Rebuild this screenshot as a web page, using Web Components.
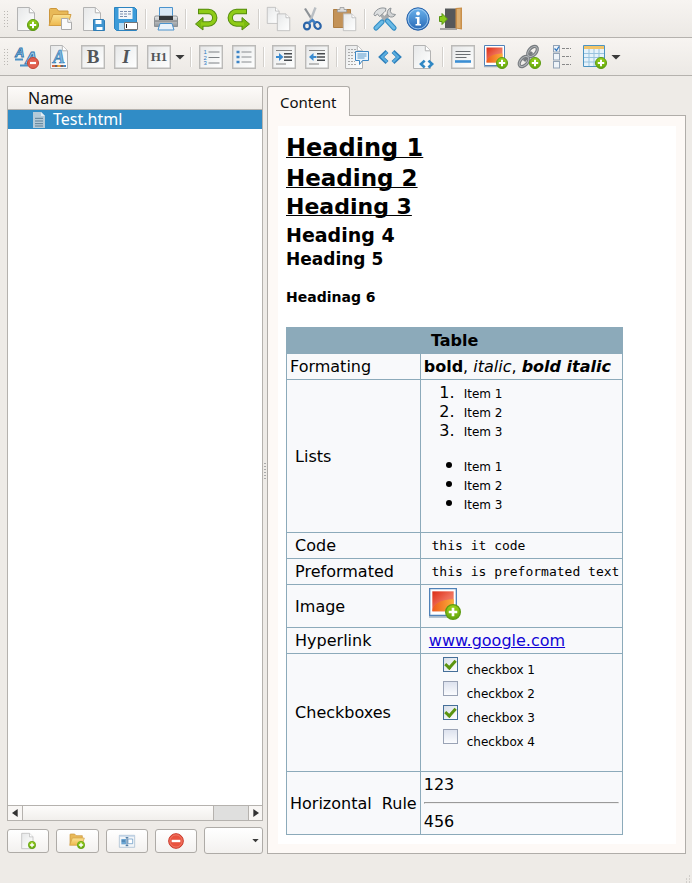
<!DOCTYPE html>
<html lang="en">
<head>
<meta charset="utf-8">
<title>Test.html</title>
<style>
html,body{margin:0;height:100%}
body{background:#eeebe7;color:#111;font:16px/19px "Noto Sans",sans-serif}
</style>
</head>
<body>
<notes-app></notes-app>
<script>
const DEFS = `<defs>
<linearGradient id="pg" x1="0" y1="0" x2="1" y2="1"><stop offset="0" stop-color="#e6e7e8"/><stop offset=".5" stop-color="#f3f4f4"/><stop offset="1" stop-color="#fff"/></linearGradient>
<linearGradient id="gr" x1="0" y1="0" x2="0" y2="1"><stop offset="0" stop-color="#9ad21a"/><stop offset="1" stop-color="#62a60b"/></linearGradient>
<linearGradient id="bl" x1="0" y1="0" x2="0" y2="1"><stop offset="0" stop-color="#6cb4ee"/><stop offset="1" stop-color="#2767b4"/></linearGradient>
<linearGradient id="fo" x1="0" y1="0" x2="0" y2="1"><stop offset="0" stop-color="#fbe393"/><stop offset="1" stop-color="#edb74c"/></linearGradient>
<linearGradient id="rd" x1="0" y1="0" x2="1" y2="1"><stop offset="0" stop-color="#dc2d16"/><stop offset=".5" stop-color="#ee6c56"/><stop offset="1" stop-color="#f59a80"/></linearGradient>
<linearGradient id="or" x1="0" y1="0" x2="1" y2="0"><stop offset="0" stop-color="#ee5a1c"/><stop offset="1" stop-color="#fbb03a"/></linearGradient>
<linearGradient id="me" x1="0" y1="0" x2="0" y2="1"><stop offset="0" stop-color="#e8e9ea"/><stop offset="1" stop-color="#8f9498"/></linearGradient>
</defs>`;
const page = `<path d="M2.5.5h11.8l5.2 5.2v17.8h-17z" fill="url(#pg)" stroke="#b3b3b3"/><path d="M14.3.8v5h5" fill="#fff" stroke="#b3b3b3"/>`;
const smallPage = (x, y) => `<g transform="translate(${x} ${y})"><path d="M.5.5h6.3l3.7 3.7v7.3H.5z" fill="#fafafa" stroke="#aaa"/><path d="M6.8.6v3.7h3.6" fill="#fff" stroke="#aaa"/></g>`;
const plus = `<circle cx="18" cy="18" r="5.5" fill="url(#gr)" stroke="#5c9b12"/><path d="M18 14.8v6.4M14.8 18h6.4" stroke="#fff" stroke-width="2"/>`;
const frame = `<path d="M.7.7h22.600v22.600H.7z" fill="url(#pg)" stroke="#bbbab8" stroke-width="1.400"/>`;
const glyph = (t, s, st, y) => `<text x="12" y="${y}" text-anchor="middle" font-family="Liberation Serif" font-weight="bold" font-size="${s}" ${st} fill="#515559">${t}</text>`;
const angles = (c) => `<path d="M9 6.5L3.2 12 9 17.5M15 6.5l5.8 5.5L15 17.5" fill="none" stroke="${c}" stroke-width="4.2"/>`;
const picture = `<path d="M.5.5h20v20H.5z" fill="#fff" stroke="#5082b8"/><path d="M2.5 2.5h16v15h-16z" fill="url(#rd)"/><path d="M2.5 17.5c0-5 6-9 16-9v9z" fill="url(#or)"/><path d="M0 21.7h21" stroke="#8aa0b5"/>`;
const undo = `<path d="M4 4.500h10.500a5.800 5.800 0 0 1 0 12.500H8" fill="none" stroke="#558c0e" stroke-width="5.400"/><path d="M9 10.500v12.500l-7.500-6z" fill="#7cba12" stroke="#558c0e"/><path d="M5 4.500h9.500a5.800 5.800 0 0 1 0 12.500H7" fill="none" stroke="#8fcb17" stroke-width="3.400"/>`;
const wideFolder = `<path d="M1.5 17.5V2.5q0-1 1-1h6l2 2.5h9.5v5" fill="#e8b958" stroke="#cc963b"/><path d="M1 18.5l4-11h18l-3.5 11z" fill="url(#fo)" stroke="#d29e43"/>`;

const ICONS = {
  'new': page + plus,
  open: wideFolder + smallPage(13, 11),
  'save-page': page + `<path d="M12.5 12.5h10l1 1v10h-11z" fill="#4095d0" stroke="#2f7cb4"/><path d="M14.5 13h6v4h-6zM15.5 20h6v3h-6z" fill="#fff"/>`,
  save: `<path d="M.5.5h20l2 2v21H2.5l-2-2z" fill="#3b9bd9" stroke="#2c83bf"/><path d="M4.5 1h14v11h-14z" fill="#f4f7fa"/><path d="M6 4.500h11M6 7h11M6 9.500h8" stroke="#7d8fb0" stroke-dasharray="3 1"/><path d="M5 16h12v7H5z" fill="#bcdff4"/><path d="M10.5 15.5h13v7h-13z" fill="#fff" stroke="#777"/><path d="M12.5 17v4" stroke="#111"/>`,
  print: `<path d="M5.500.5h13v10h-13z" fill="#d8e8f6" stroke="#4b93cd"/><path d="M.5 10.500q0-1.500 1.500-1.500h20q1.500 0 1.500 1.500v9H.5z" fill="url(#me)" stroke="#8c9195"/><path d="M5 9h14v4H5z" fill="#32363a"/><path d="M1 14h22" stroke="#777"/><path d="M6 16.500h12l2 6.500H4z" fill="#e9f2fb" stroke="#4b93cd"/>`,
  undo,
  redo: `<g transform="translate(24 0) scale(-1 1)">${undo}</g>`,
  copy: `<g transform="translate(-1.500 0) scale(.7)">${page}</g><g transform="translate(8.500 6.500) scale(.73)">${page}</g>`,
  cut: `<path d="M5 1.500l9.500 15" stroke="#8c9196" stroke-width="2.200"/><path d="M15.500.5L9.500 16" stroke="#b9bec3" stroke-width="2.400"/><ellipse cx="7" cy="19" rx="3" ry="3.400" fill="none" stroke="#2b64a8" stroke-width="2.200"/><ellipse cx="17.500" cy="18.500" rx="3" ry="3.600" transform="rotate(-35 17.500 18.500)" fill="none" stroke="#2b64a8" stroke-width="2.200"/><path d="M8.500 16l4-3 3 3" fill="none" stroke="#3f7fc4" stroke-width="2.200"/>`,
  paste: `<path d="M.5 2.500h17v18H.5z" fill="#c39257" stroke="#ad7d42"/><path d="M4.500 2.500h2.500V.5h4v2h2.500v2.500h-9z" fill="#dcdcdc" stroke="#9a9d9f" stroke-width=".8"/><g transform="translate(8.500 6.500) scale(.73)">${page}</g>`,
  tools: `<path d="M10 13L18 5.500" stroke="#a4a8ab" stroke-width="4"/><path d="M22.500 7.500a4.500 4.500 0 0 1-7 1.500 4.800 4.800 0 0 1 2.500-8l-.8 3.800 2.300 2.200z" fill="#d2d4d5" stroke="#8e9397"/><path d="M7.500 7l6 7" stroke="#a8acaf" stroke-width="3.400"/><path d="M1 7.500C2 3 7.500-.5 13 1.500L12.500 4 11 5.500 6.500 9.500l-2-2.500L2 9z" fill="#dddfe0" stroke="#8e9397"/><path d="M14.500 14l6.500 7M9 15l-6 6" stroke="#338cc2" stroke-width="5.200" stroke-linecap="round"/><path d="M14.500 14l6.500 7M9 15l-6 6" stroke="#6abae6" stroke-width="3" stroke-linecap="round"/>`,
  info: `<circle cx="12" cy="12" r="11.200" fill="url(#bl)" stroke="#2a62a8"/><circle cx="12" cy="12" r="9.900" fill="none" stroke="#a3ccf0" stroke-width=".9"/><circle cx="12" cy="6.500" r="1.900" fill="#fff"/><path d="M9.500 10h4v7h1.500v1.500H9.500V17H11v-5.500H9.500z" fill="#fff"/>`,
  exit: `<path d="M6 1.500h12V21H6z" fill="#56585a"/><path d="M1 22h17" stroke="#777" stroke-width="1.200"/><path d="M16.500 1l6.500-.5v22l-6.500-1z" fill="#c98f4a"/><path d="M18 2l3.500-.3v19.500l-3.500-.5z" fill="#deb071"/><path d="M.5 9.500H3V6.500l5.500 5.500L3 17.500v-3H.5z" fill="#8bcc1c" stroke="#569412"/>`,
  clear: `<g font-family="Liberation Sans" font-weight="bold" font-style="italic" fill="#a5d0ee" stroke="#2f75ad" stroke-width=".9"><text x="0" y="12" font-size="13">A</text><text x="10" y="19" font-size="17">A</text></g><path d="M0 14.500h8M5 20.500h8" stroke="#4b92c8" stroke-width="2"/><circle cx="18" cy="18" r="5.500" fill="#e2604f" stroke="#c24535"/><path d="M15 18h6" stroke="#fff" stroke-width="2.200"/>`,
  color: page + `<text x="11" y="17.500" text-anchor="middle" font-family="Liberation Serif" font-style="italic" font-weight="bold" font-size="18" fill="#78b5e0" stroke="#2f75ad" stroke-width=".6">A</text><path d="M4 21h14" stroke="#d9683f" stroke-width="2"/><path d="M7 21h2.500M13 21h2" stroke="#666" stroke-width="2"/><path d="M9.500 21h2.500" stroke="#eba93b" stroke-width="2"/><path d="M15.500 21h2.500" stroke="#3f86c8" stroke-width="2"/>`,
  bold: frame + glyph('B', 19, '', 18),
  italic: frame + glyph('I', 19, 'font-style="italic"', 18),
  heading: frame + glyph('H1', 13, '', 16),
  numbered: frame + `<g font-family="Liberation Sans" font-size="6" fill="#2d78c0"><text x="4.500" y="9">1</text><text x="4.500" y="14.500">2</text><text x="4.500" y="20">3</text></g><path d="M9.500 7h11M9.500 12.500h11M9.500 18h11" stroke="#7c8084"/>`,
  bullets: frame + `<path d="M4.500 7h3M4.500 12h3M4.500 17h3" stroke="#3c84c6" stroke-width="2.600"/><path d="M9.500 7h10M9.500 12h10M9.500 17h10" stroke="#888c90"/>`,
  indent: frame + `<path d="M4 5.500h16M4 19h10" stroke="#777" stroke-width=".9"/><path d="M12 8.700h8M12 12h8M12 15.300h8" stroke="#45494d" stroke-width="1.500"/><path d="M4 11h3V8l4.500 4L7 16v-3H4z" fill="#3b8bd0"/>`,
  outdent: frame + `<path d="M4 5.500h16M4 19h10" stroke="#777" stroke-width=".9"/><path d="M12 8.700h8M12 12h8M12 15.300h8" stroke="#45494d" stroke-width="1.500"/><path d="M11.500 11h-3V8L4 12l4.500 4v-3h3z" fill="#3b8bd0"/>`,
  comment: `<g transform="translate(-2 0)">${page}</g><path d="M3 4.500h9M3 7.500h7M3 10.500h6M3 13.500h6M3 16.500h7M3 19.500h9" stroke="#aaa" stroke-dasharray="2 1"/><path d="M10.500 6.500h13v9h-6l-3 4v-4h-4z" fill="#eaf4fc" stroke="#3e87c3"/><path d="M12.500 9h9M12.500 11h9M12.500 13h7" stroke="#5b9acb"/>`,
  code: angles('#2f7fba') + `<path d="M9 7L3.800 12 9 17M15 7l5.200 5-5.200 5" fill="none" stroke="#59aee0" stroke-width="2"/>`,
  'code-page': page + `<g transform="translate(8 11.500) scale(.63)">${angles('#2f87c4')}</g>`,
  rule: frame + `<path d="M4.500 6.500h15M4.500 9.500h15M4.500 12.500h11" stroke="#6a6e72" stroke-width="1.200"/><path d="M4 16.500h16" stroke="#3b8ed4" stroke-width="2.600"/>`,
  image: picture + plus,
  link: `<g fill="none"><g stroke="#777b7f" stroke-width="3.200"><ellipse cx="15.500" cy="6.500" rx="6" ry="3.600" transform="rotate(-48 15.500 6.500)"/><ellipse cx="7" cy="16.500" rx="6" ry="3.600" transform="rotate(-48 7 16.500)"/><path d="M7 16l8-9"/></g><g stroke="#b4b8bb"><ellipse cx="15.500" cy="6.500" rx="6" ry="3.600" transform="rotate(-48 15.500 6.500)"/><ellipse cx="7" cy="16.500" rx="6" ry="3.600" transform="rotate(-48 7 16.500)"/></g></g>` + plus,
  checks: [.5, 8.5, 16.5].map(y => `<rect x="3.500" y="${y}" width="6" height="6.500" fill="#eef3f8" stroke="#93a3b6"/><path d="M12 ${y + 3}h9" stroke="#888" stroke-dasharray="3 1"/>`).join('') + `<path d="M4.500 3.500l2 2 2.500-4" stroke="#2f75bd" fill="none" stroke-width="1.300"/>`,
  table: `<path d="M.5.5h21v21H.5z" fill="#e5f2fb" stroke="#4c93c1"/><path d="M1 1h20v3H1z" fill="#f2c56a"/><path d="M1 8.500h20M1 12.500h20M1 17h20M6 4v17M11 4v17M16 4v17" stroke="#98c3df"/>` + plus,
  folder: wideFolder + plus,
  rename: `<path d="M.5 3.500h23v18H.5z" fill="#f2f5f8" stroke="#9bb3cc"/><path d="M1 4.500h22" stroke="#bdd0e4" stroke-width="2"/><path d="M3.500 9h7v8h-7z" fill="#6ba5d3"/><path d="M13.500 9h7v7h-7z" fill="#fff" stroke="#5a8fc0"/><path d="M12 7v12M10 7h4M10 19h4M4 12h5" stroke="#41709c" stroke-width="1.500"/>`,
  remove: `<circle cx="12" cy="12" r="11" fill="#e9533f" stroke="#c9392a" stroke-width="1.500"/><circle cx="12" cy="12" r="9.200" fill="none" stroke="#f38c7b"/><path d="M5.500 12h13" stroke="#fff" stroke-width="3.600"/>`,
  down: `<path d="M1 7h22L12 18z" fill="#3a3a3a"/>`,
  left: `<path d="M20 0v24L3 12z" fill="#333"/>`,
  right: `<path d="M4 0v24l17-12z" fill="#333"/>`,
  doc: `<path d="M3 0h12l6 6v18H3z" fill="#b4cad8"/><path d="M15 0v6h6z" fill="#e2edf4"/><path d="M6 9.500h12M6 13.500h12M6 17.500h12M6 21h12" stroke="#5d7f96" stroke-width="1.500"/>`
};

function define(name, html, setup) {
  const t = document.createElement('template');
  t.innerHTML = html;
  customElements.define(name, class extends HTMLElement {
    constructor() {
      super();
      this.attachShadow({ mode: 'open' }).append(t.content.cloneNode(true));
    }
    connectedCallback() { if (setup) setup(this, this.shadowRoot); }
  });
}

define('ui-icon', `<style>:host{display:block;width:24px;height:24px;flex:none}svg{display:block;width:100%;height:100%;overflow:visible}</style><svg viewBox="0 0 24 24" aria-hidden="true"></svg>`,
  (el, root) => { root.querySelector('svg').innerHTML = DEFS + (ICONS[el.getAttribute('name')] || ''); });

define('tool-button', `<style>
:host{display:block;flex:none}
button{display:flex;align-items:center;justify-content:center;width:33px;height:32px;padding:0;border:0;background:none}
:host([icon=down]) button{width:12px;justify-content:flex-start}
:host([icon=down]) ui-icon{width:10px;height:10px}
</style><button type="button"></button>`,
  (el, root) => {
    const b = root.querySelector('button');
    b.setAttribute('aria-label', el.getAttribute('label'));
    b.innerHTML = `<ui-icon name="${el.getAttribute('icon')}"></ui-icon>`;
  });

define('tool-separator', `<style>:host{display:block;flex:none;width:1px;height:20px;margin:0 3px;background:#d3d0cc;box-shadow:1px 0 #fff}</style>`);

define('tool-bar', `<style>
:host{display:flex;align-items:center;height:37px;border-bottom:1px solid #b5b2ae;background:linear-gradient(#f7f4f1,#ece9e5)}
i{flex:none;width:5px;height:18px;margin:0 2px 0 3px;background:radial-gradient(circle,#bbb8b4 30%,transparent 40%) 0 0/3px 3px}
</style><i></i><slot></slot>`);

define('push-button', `<style>
:host{display:block;flex:1;min-width:0}
button{display:flex;align-items:center;justify-content:center;width:100%;height:24px;padding:0;border:1px solid #aeaba7;border-radius:3px;background:linear-gradient(#fff,#f3f1ef)}
ui-icon{width:16px;height:16px}
</style><button type="button"></button>`,
  (el, root) => {
    const b = root.querySelector('button');
    b.setAttribute('aria-label', el.getAttribute('label'));
    b.innerHTML = `<ui-icon name="${el.getAttribute('icon')}"></ui-icon>`;
  });

define('combo-box', `<style>
:host{display:grid;flex:none;width:59px;align-items:center}
select,ui-icon{grid-area:1/1}
select{appearance:none;width:100%;height:27px;border:1px solid #aeaba7;border-radius:3px;background:linear-gradient(#fff,#f3f1ef)}
ui-icon{justify-self:end;width:7px;height:7px;margin-right:4px;pointer-events:none}
</style><select aria-label="More actions"><option></option></select><ui-icon name="down"></ui-icon>`);

define('scroll-bar', `<style>
:host{display:flex;height:14px;border-top:1px solid #b5b2ae;background:#dfdfde}
button{display:flex;align-items:center;justify-content:center;flex:none;width:14px;padding:0;border:0;background:#f8f6f4}
button ui-icon{width:8px;height:8px}
.track{flex:1;display:flex}
.thumb{width:85%;border:solid #b5b2ae;border-width:0 1px;box-sizing:border-box;background:linear-gradient(#fdfcfb,#f1efec)}
.end{border-left:1px solid #b5b2ae}
</style><button type="button" aria-label="Scroll left"><ui-icon name="left"></ui-icon></button><div class="track"><div class="thumb"></div></div><button class="end" type="button" aria-label="Scroll right"><ui-icon name="right"></ui-icon></button>`);

define('file-tree', `<style>
:host{display:flex;flex-direction:column;min-width:0}
.box{flex:1;display:flex;flex-direction:column;border:1px solid #b5b2ae;background:#fff}
.head{height:22px;line-height:22px;padding-left:20px;border-bottom:1px solid #b5b2ae;background:linear-gradient(#fdfbf9,#efece8)}
.row{display:flex;align-items:center;gap:6px;height:19px;padding-left:23px;background:#308cc6;color:#fff}
.row ui-icon{width:16px;height:16px}
.space{flex:1}
.actions{display:flex;align-items:center;gap:7px;margin-top:6px}
</style><div class="box"><div class="head">Name</div><div class="row"><ui-icon name="doc"></ui-icon><span>Test.html</span></div><div class="space"></div><scroll-bar></scroll-bar></div>
<div class="actions"><push-button icon="new" label="New page"></push-button><push-button icon="folder" label="New folder"></push-button><push-button icon="rename" label="Rename"></push-button><push-button icon="remove" label="Delete"></push-button><combo-box></combo-box></div>`);

define('tab-pane', `<style>
:host{display:flex;flex-direction:column;min-width:0}
button{align-self:flex-start;height:30px;margin:0 0 -1px;padding:0 13px 0 12px;border:1px solid #b0ada9;border-bottom:0;border-radius:3px 3px 0 0;background:#fdf9f6;color:#111;font:15px/28px "Noto Sans",sans-serif;position:relative}
.pane{flex:1;border:1px solid #b0ada9;background:#fdf9f6;padding:10px 9px 9px 10px;display:flex}
.view{flex:1;min-width:0;background:#fff;padding:7px 8px 8px}
</style><button type="button" role="tab" aria-selected="true">Content</button><div class="pane"><div class="view"><slot></slot></div></div>`);

define('check-item', `<style>
:host{display:flex;height:24px;align-items:flex-start;gap:9px;font-size:12px}
input{appearance:none;flex:none;width:15px;height:15px;margin:0;border:1px solid #9aa3b5;background:linear-gradient(#dde2ee,#fbfcfe);display:grid;place-items:center}
input:checked{border-color:#456f99;background:linear-gradient(135deg,#d8dfe8,#fff)}
input:checked::after{content:"";width:4px;height:8px;margin-bottom:2px;border:solid #5b9410;border-width:0 3px 3px 0;transform:rotate(42deg)}
label{line-height:16px;padding-top:5px}
</style><input type="checkbox" id="c"><label for="c"><slot></slot></label>`,
  (el, root) => { root.querySelector('input').checked = el.hasAttribute('checked'); });

define('html-document', `<style>
:host{display:block;font:16px/19px "DejaVu Sans",sans-serif;color:#000}
h1,h2,h3,h4,h5,h6{margin:0}
h1,h2,h3{text-decoration:underline;text-decoration-thickness:1px;text-underline-offset:1px;text-decoration-skip-ink:none}
h1{font-size:24px;line-height:30px}
h2{font-size:23px;line-height:30px}
h3{font-size:22px;line-height:28px}
h4{font-size:19px;line-height:28px}
h5{font-size:17px;line-height:20px}
h6{font-size:14px;line-height:20px;margin:18px 0 20px}
table{border-collapse:collapse;background:#f8f9fb}
th,td{border:1px solid #8caaba;padding:3px;text-align:left;font-weight:normal;vertical-align:middle}
thead th{background:#8caaba;text-align:center;font-weight:bold}
ol,ul{margin:0 0 16px;padding-left:36px}
ul{list-style:none}
li{padding-left:4px}
li span{font-size:12px;line-height:12px}
.dots li::before{content:"";display:inline-block;width:6px;height:6px;margin:0 12px 3px -18px;border-radius:50%;background:#000}
.checks{margin-bottom:15px;padding-left:19px}
.checks li{padding:0}
code,pre{display:block;margin:0;font:13px/19px "DejaVu Sans Mono",monospace}
.pic{padding-left:8px}
.pic ui-icon{width:32px;height:32px;margin-bottom:4px}
a{color:#1205d6}
hr{margin:8px 0}
</style>
<h1>Heading 1</h1><h2>Heading 2</h2><h3>Heading 3</h3><h4>Heading 4</h4><h5>Heading 5</h5><h6>Headinag 6</h6>
<table>
<thead><tr><th colspan="2">Table</th></tr></thead>
<tbody>
<tr><th scope="row">Formating</th><td><b>bold</b>, <i>italic</i>, <b><i>bold italic</i></b></td></tr>
<tr><th scope="row">&nbsp;Lists</th><td><ol><li><span>Item 1</span></li><li><span>Item 2</span></li><li><span>Item 3</span></li></ol><ul class="dots"><li><span>Item 1</span></li><li><span>Item 2</span></li><li><span>Item 3</span></li></ul></td></tr>
<tr><th scope="row">&nbsp;Code</th><td><code>&nbsp;this it code</code></td></tr>
<tr><th scope="row">&nbsp;Preformated</th><td><pre> this is preformated text</pre></td></tr>
<tr><th scope="row">&nbsp;Image</th><td class="pic"><ui-icon name="image"></ui-icon></td></tr>
<tr><th scope="row">&nbsp;Hyperlink</th><td>&nbsp;<a href="http://www.google.com">www.google.com</a></td></tr>
<tr><th scope="row">&nbsp;Checkboxes</th><td><ul class="checks"><li><check-item checked>checkbox 1</check-item></li><li><check-item>checkbox 2</check-item></li><li><check-item checked>checkbox 3</check-item></li><li><check-item>checkbox 4</check-item></li></ul></td></tr>
<tr><th scope="row">Horizontal&nbsp; Rule</th><td>123<hr>456</td></tr>
</tbody></table>`);

const bar = (items) => items.map(([icon, label]) => icon ? `<tool-button icon="${icon}" label="${label}"></tool-button>` : '<tool-separator></tool-separator>').join('');
const SEP = [''];
const fileTools = [['new', 'New page'], ['open', 'Open'], ['save-page', 'Save page'], ['save', 'Save as'], SEP, ['print', 'Print'], SEP, ['undo', 'Undo'], ['redo', 'Redo'], SEP, ['copy', 'Copy'], ['cut', 'Cut'], ['paste', 'Paste'], SEP, ['tools', 'Settings'], ['info', 'About'], ['exit', 'Exit']];
const formatTools = [['clear', 'Clear formatting'], ['color', 'Text colour'], ['bold', 'Bold'], ['italic', 'Italic'], ['heading', 'Heading'], ['down', 'Heading levels'], SEP, ['numbered', 'Numbered list'], ['bullets', 'Bulleted list'], SEP, ['indent', 'Indent'], ['outdent', 'Outdent'], SEP, ['comment', 'Preformatted'], ['code', 'Code'], ['code-page', 'Edit source'], SEP, ['rule', 'Horizontal rule'], ['image', 'Insert image'], ['link', 'Insert link'], ['checks', 'Insert checkbox'], ['table', 'Insert table'], ['down', 'Table options']];

define('notes-app', `<style>
:host{display:flex;flex-direction:column;min-height:100%}
main{flex:1;display:grid;grid-template-columns:minmax(0,256fr) 4px minmax(0,419fr);padding:10px 6px 0 7px}
.split{align-self:center;height:17px;width:2px;margin-left:1px;background:radial-gradient(circle,#aaa 30%,transparent 45%) 0 0/2px 3px}
footer{display:flex;justify-content:flex-end;align-items:flex-end;height:29px}
</style>
<tool-bar role="toolbar">${bar(fileTools)}</tool-bar>
<tool-bar role="toolbar">${bar(formatTools)}</tool-bar>
<main><file-tree></file-tree><div class="split"></div><tab-pane><html-document></html-document></tab-pane></main>
<footer><svg width="8" height="8" aria-hidden="true"><path d="M5 1h1M2 4h1M5 4h1M2 7h1M5 7h1" stroke="#b5b2ae"/></svg></footer>`);
</script>
</body>
</html>
